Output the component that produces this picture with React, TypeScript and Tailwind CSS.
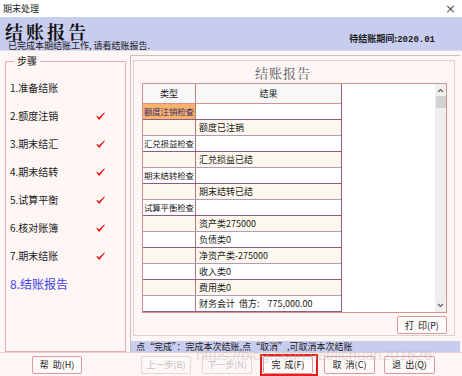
import React from "react";

const FONT = "font-['Noto_Sans_CJK_SC','Liberation_Sans',sans-serif]";

function Check() {
  return (
    <svg width="9" height="9" viewBox="0 0 9 9" className="block">
      <path d="M0.8 4.6 L3.2 7.6 L8.4 0.8 L3.3 5.6 Z" fill="#e01010" stroke="#e01010" strokeWidth="0.8" strokeLinejoin="round" />
    </svg>
  );
}

const steps: { label: string; done: boolean }[] = [
  { label: "1.准备结账", done: false },
  { label: "2.额度注销", done: true },
  { label: "3.期末结汇", done: true },
  { label: "4.期末结转", done: true },
  { label: "5.试算平衡", done: true },
  { label: "6.核对账簿", done: true },
  { label: "7.期末结账", done: true },
];

const rows: { c1?: string; c2?: string; sel?: boolean }[] = [
  { c1: "额度注销检查", sel: true },
  { c2: "额度已注销" },
  { c1: "汇兑损益检查" },
  { c2: "汇兑损益已结" },
  { c1: "期末结转检查" },
  { c2: "期末结转已结" },
  { c1: "试算平衡检查" },
  { c2: "资产类275000" },
  { c2: "负债类0" },
  { c2: "净资产类-275000" },
  { c2: "收入类0" },
  { c2: "费用类0" },
  { c2: "财务会计  借方:    775,000.00" },
];

function Btn({ label, disabled, w = "w-[50px]" }: { label: string; disabled?: boolean; w?: string }) {
  return (
    <div
      className={`${w} h-[18px] flex items-center justify-center rounded-[2px] border text-[9px] leading-none whitespace-pre ${
        disabled ? "border-[#e6d6d6] text-[#c4c4c4] bg-[#fdf8f7]" : "border-[#e09a9a] text-[#202020] bg-[#fffafa]"
      }`}
    >
      {label}
    </div>
  );
}

export default function App() {
  return (
    <div className={`w-[462px] h-[376px] bg-[#fdf6f4] relative overflow-hidden ${FONT} text-[#1a1a1a]`}>
      {/* title bar */}
      <div className="h-[17px] bg-white flex items-center justify-between pl-[3px] pr-[6px]">
        <span className="text-[9px] leading-none">期末处理</span>
        <span className="text-[13px] leading-none text-[#555] font-['DejaVu_Sans',sans-serif]">×</span>
      </div>
      {/* header */}
      <div className="h-[33px] bg-[#c8ccee] flex justify-between">
        <div className="flex flex-col pl-[5px] pt-[5px]">
          <span className="text-[18px] leading-[19px] font-bold tracking-[3px] font-['Noto_Serif_CJK_SC','Noto_Sans_CJK_SC',serif] text-[#111]">结账报告</span>
          <span className="text-[9px] leading-[10px] pl-[3px]">已完成本期结账工作, 请看结账报告.</span>
        </div>
        <div className="pt-[6px] pr-[27px]">
          <span className="text-[9px] font-bold leading-none">待结账期间:<span className="font-['Liberation_Mono',monospace]">2020.01</span></span>
        </div>
      </div>
      <div className="h-px bg-[#dcdce4]" />
      {/* body */}
      <div className="h-[301px] flex">
        <fieldset className="ml-[5px] mt-[5px] w-[121px] h-[296px] border border-[#e8acac] px-[4px] pt-[8px] min-w-0">
          <legend className="ml-[4px] px-[3px] text-[10px] leading-none">步骤</legend>
          <div className="flex flex-col">
            {steps.map((s) => (
              <div key={s.label} className="h-[28px] flex items-center">
                <span className="w-[86px] text-[10px] leading-none">{s.label}</span>
                {s.done && <Check />}
              </div>
            ))}
            <div className="h-[28px] flex items-center">
              <span className="text-[12px] leading-none text-[#4444ee]">8.结账报告</span>
            </div>
          </div>
        </fieldset>
        <div className="ml-[4px] mt-[4px] w-[330px] h-[297px] border-l border-t border-[#c8c0c0] flex flex-col">
          <div className="ml-[2px] mt-[4px] w-[322px] h-[276px] border border-[#ddd2d2] flex flex-col pl-[8px]">
            <div className="h-[22px] flex items-center pl-[113px]">
              <span className="text-[13px] leading-none tracking-[1px] text-[#555] font-['Noto_Serif_CJK_SC','Noto_Sans_CJK_SC',serif]">结账报告</span>
            </div>
            <div className="w-[305px] h-[230px] border border-[#d89090] flex overflow-hidden">
              <div className="w-[199px] border-r border-[#8c5c8c] flex flex-col">
                <div className="h-[20px] flex bg-[#f8f8f8] border-b border-[#d89090]">
                  <div className="w-[53px] border-r border-[#c88080] flex items-center justify-center text-[9px]">类型</div>
                  <div className="flex-1 flex items-center justify-center text-[9px]">结果</div>
                </div>
                {rows.map((r, i) => (
                  <div
                    key={i}
                    className={`h-[16px] flex border-b ${i % 2 === 0 ? "border-[#8c5c8c] bg-white" : "border-[#b898b8] bg-[#fdf8ee]"}`}
                  >
                    <div
                      className={`w-[53px] border-r border-[#b07878] flex items-center pl-[1px] text-[8.5px] tracking-[-0.2px] leading-none whitespace-nowrap overflow-hidden ${
                        r.sel ? "bg-[#f8b26c] text-[#3a2a6a]" : ""
                      }`}
                    >
                      {r.c1 ?? ""}
                    </div>
                    <div className="flex-1 flex items-center pl-[3px] text-[9px] leading-none whitespace-pre">{r.c2 ?? ""}</div>
                  </div>
                ))}
              </div>
              <div className="flex-1 bg-white" />
              <div className="w-[11px] bg-[#efefef] flex flex-col items-center">
                <svg width="7" height="5" viewBox="0 0 7 5" className="mt-[4px]">
                  <path d="M1 4 L3.5 1.5 L6 4" fill="none" stroke="#606060" strokeWidth="1.2" />
                </svg>
                <div className="mt-[3px] w-[10px] h-[12px] bg-[#d2d2d2]" />
                <div className="flex-1" />
                <svg width="7" height="5" viewBox="0 0 7 5" className="mb-[4px]">
                  <path d="M1 1 L3.5 3.5 L6 1" fill="none" stroke="#606060" strokeWidth="1.2" />
                </svg>
              </div>
            </div>
            <div className="w-[305px] flex justify-end mt-[3px]">
              <Btn label="打  印(P)" />
            </div>
          </div>
          <div className="mt-[5px] h-[11px] bg-[#c8ccee] flex items-center pl-[5px]">
            <span className="text-[9px] leading-none whitespace-pre">点“完成”：完成本次结账,点“取消”,可取消本次结账</span>
          </div>
        </div>
      </div>
      {/* bottom buttons */}
      <div className="h-[24px] border-t border-[#e8d0d0] flex items-center pl-[32px]">
        <Btn label="帮  助(H)" />
        <div className="ml-[59px]">
          <Btn label="上一步(B)" disabled />
        </div>
        <div className="ml-[11px]">
          <Btn label="下一步(N)" disabled />
        </div>
        <div className="ml-[8px] w-[58px] h-[22px] border-2 border-[#e02020] flex items-center pl-[1px]">
          <Btn label="完  成(F)" />
        </div>
        <div className="ml-[6px]">
          <Btn label="取  消(C)" w="w-[51px]" />
        </div>
        <div className="ml-[9px]">
          <Btn label="退  出(Q)" w="w-[51px]" />
        </div>
      </div>
      {/* watermark */}
      <div className="absolute left-[196px] top-[347px] text-[15px] leading-none text-[#b8b8b8] opacity-40 font-['Liberation_Sans',sans-serif] pointer-events-none">
        https://blog.csdn.net/lichuan201626
      </div>
    </div>
  );
}
